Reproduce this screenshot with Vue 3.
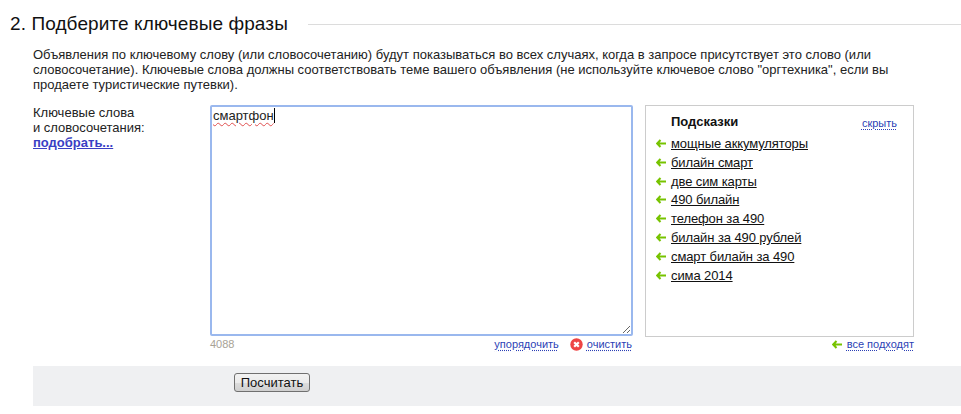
<script setup>
const tips = ['мощные аккумуляторы','билайн смарт','две сим карты','490 билайн','телефон за 490','билайн за 490 рублей','смарт билайн за 490','сима 2014']
</script>

<template>
  <div class="page">
    <div class="head">
      <h2>2. Подберите ключевые фразы</h2>
      <div class="rule"></div>
    </div>
    <p class="intro">
      Объявления по ключевому слову (или словосочетанию) будут показываться во всех случаях, когда в запросе присутствует это слово (или<br>
      словосочетание). Ключевые слова должны соответствовать теме вашего объявления (не используйте ключевое слово "оргтехника", если вы<br>
      продаете туристические путевки).
    </p>
    <div class="form">
      <div class="label">
        Ключевые слова<br>и словосочетания:<br>
        <a class="pick">подобрать...</a>
      </div>
      <div class="editor">
        <div class="area"><span class="word">смартфон</span><span class="caret"></span></div>
        <div class="under">
          <span class="count">4088</span>
          <span class="actions">
            <a class="dot">упорядочить</a>
            <svg class="x" width="13" height="13" viewBox="0 0 13 13"><circle cx="6.5" cy="6.5" r="6.2" fill="#ee4444"/><path d="M4.2 4.2l4.6 4.6M8.8 4.2l-4.6 4.6" stroke="#fff" stroke-width="2.2"/></svg>
            <a class="dot">очистить</a>
          </span>
        </div>
      </div>
      <div class="side">
        <div class="tips">
          <div class="tips-head"><b>Подсказки</b><a class="dot">скрыть</a></div>
          <ul>
            <li v-for="t in tips" :key="t">
              <svg class="arrow" width="10" height="9" viewBox="0 0 10 9"><path d="M4.5 1L1.2 4.5 4.5 8M1.5 4.5H10" fill="none" stroke="#77c300" stroke-width="2"/></svg>
              <a>{{ t }}</a>
            </li>
          </ul>
        </div>
        <div class="all">
          <svg class="arrow" width="10" height="9" viewBox="0 0 10 9"><path d="M4.5 1L1.2 4.5 4.5 8M1.5 4.5H10" fill="none" stroke="#77c300" stroke-width="2"/></svg>
          <a class="dot">все подходят</a>
        </div>
      </div>
    </div>
    <div class="band"><button type="button">Посчитать</button></div>
  </div>
</template>

<style scoped>
.page { width: 961px; height: 414px; overflow: hidden; font-family: "Liberation Sans", Arial, sans-serif; font-size: 13px; line-height: 15px; color: #222; background: #fff; padding-top: 13px; box-sizing: border-box; }
.head { display: flex; align-items: center; padding-left: 10px; gap: 20px; }
h2 { margin: 0; font-size: 19px; line-height: 22px; font-weight: 400; color: #111; white-space: nowrap; letter-spacing: 0.1px; }
.rule { flex: 1; height: 1px; background: #dcdcdc; }
.intro { margin: 12px 0 0 33px; white-space: nowrap; }
.form { display: flex; margin: 13px 0 0 33px; }
.label { width: 177px; flex: none; }
.pick { font-weight: 700; color: #3a3fc4; text-decoration: underline; }
.editor { width: 423px; flex: none; }
.area { box-sizing: border-box; height: 231px; width: 423px; border: 2px solid #9ab8ee; border-radius: 2px; padding: 1px; resize: both; overflow: auto; color: #222; line-height: 15px; }
.word { text-decoration: underline wavy #e05050 1px; text-underline-offset: 2px; }
.caret { display: inline-block; width: 1px; height: 15px; background: #000; vertical-align: top; }
.under { display: flex; justify-content: space-between; align-items: center; font-size: 11px; line-height: 14px; margin-top: 1px; }
.count { color: #a8a296; font-size: 11px; }
.actions { display: flex; align-items: center; margin-right: 1px; }
.dot { color: #2b3fb5; text-decoration: underline dotted; text-underline-offset: 2px; font-size: 11px; line-height: 14px; }
.x { margin: 0 4px 0 11px; }
.side { width: 269px; flex: none; margin-left: 12px; }
.tips { box-sizing: border-box; height: 232px; border: 1px solid #ccc; padding: 8px 16px 0 10px; }
.tips-head { display: flex; justify-content: space-between; align-items: flex-end; padding-left: 15px; }
.tips-head b { color: #111; font-size: 13px; }
.tips-head .dot { position: relative; top: 1px; }
ul { list-style: none; margin: 5px 0 0; padding: 0; }
li { display: flex; align-items: center; height: 18.85px; gap: 5px; }
li a { color: #111; text-decoration: underline; font-size: 13px; letter-spacing: -0.1px; }
.arrow { flex: none; }
.all { display: flex; justify-content: flex-end; align-items: center; gap: 5px; line-height: 14px; }
.band { margin: 15px 0 0 33px; height: 40px; background: #eff0f2; padding: 7px 0 0 201px; box-sizing: border-box; }
button { display: block; box-sizing: border-box; width: 76px; height: 19px; padding: 0; border: 1px solid #707070; border-radius: 3px; background: linear-gradient(#f2f2f2, #ebebeb 50%, #dddddd 50%, #cfcfcf); font: 13px/15px "Liberation Sans", Arial, sans-serif; color: #111; }
</style>
